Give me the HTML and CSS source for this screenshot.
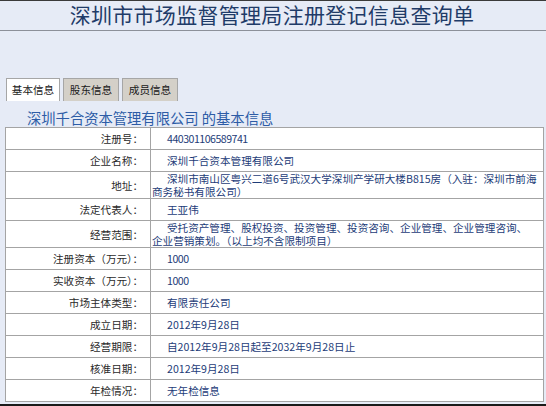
FILE: index.html
```html
<!DOCTYPE html>
<html lang="zh-CN">
<head>
<meta charset="utf-8">
<title>深圳市市场监督管理局注册登记信息查询单</title>
<link rel="stylesheet" href="styles.css">
</head>
<body>
<div class="page">
  <header class="header">
    <h1 class="title">深圳市市场监督管理局注册登记信息查询单</h1>
  </header>
  <nav class="tabs">
    <span class="tab active">基本信息</span>
    <span class="tab">股东信息</span>
    <span class="tab">成员信息</span>
  </nav>
  <h2 class="heading">深圳千合资本管理有限公司 的基本信息</h2>
  <table class="info">
    <tr><td class="label">注册号：</td><td class="value num">440301106589741</td></tr>
    <tr><td class="label">企业名称：</td><td class="value">深圳千合资本管理有限公司</td></tr>
    <tr class="double"><td class="label">地址：</td><td class="value">深圳市南山区粤兴二道6号武汉大学深圳产学研大楼B815房（入驻：深圳市前海商务秘书有限公司）</td></tr>
    <tr><td class="label">法定代表人：</td><td class="value">王亚伟</td></tr>
    <tr class="double"><td class="label">经营范围：</td><td class="value">受托资产管理、股权投资、投资管理、投资咨询、企业管理、企业管理咨询、企业营销策划。（以上均不含限制项目）</td></tr>
    <tr><td class="label">注册资本（万元）：</td><td class="value num">1000</td></tr>
    <tr><td class="label">实收资本（万元）：</td><td class="value num">1000</td></tr>
    <tr><td class="label">市场主体类型：</td><td class="value">有限责任公司</td></tr>
    <tr><td class="label">成立日期：</td><td class="value">2012年9月28日</td></tr>
    <tr><td class="label">经营期限：</td><td class="value">自2012年9月28日起至2032年9月28日止</td></tr>
    <tr><td class="label">核准日期：</td><td class="value">2012年9月28日</td></tr>
    <tr><td class="label">年检情况：</td><td class="value">无年检信息</td></tr>
  </table>
</div>
</body>
</html>
```

FILE: styles.css
```css
html, body {
  margin: 0;
  padding: 0;
  background: #e6ebf6;
}
body {
  font-family: "Noto Sans CJK SC", "DejaVu Sans", sans-serif;
  font-size: 10.6px;
  color: #222;
  height: 406px;
  overflow: hidden;
}
.page {
  border-top: 1px solid #3a3a3a;
  height: 403px;
  border-bottom: 2px solid #1a1a1a;
  box-sizing: content-box;
}
.header {
  height: 29px;
  border-bottom: 1px solid #8c9099;
  display: flex;
  justify-content: center;
}
.title {
  margin: 0;
  font-weight: normal;
  font-size: 21px;
  line-height: 26px;
  letter-spacing: 0.3px;
  color: #1f3b68;
  padding-right: 2px;
}
.tabs {
  display: flex;
  gap: 3px;
  padding-left: 6px;
  margin-top: 47px;
  height: 23px;
}
.tab {
  display: block;
  box-sizing: border-box;
  height: 23px;
  line-height: 21px;
  padding: 0;
  border: 1px solid #a6a6a6;
  border-bottom: none;
  background: #d4d0c8;
  color: #1a1a1a;
  width: 56px;
  text-align: center;
  white-space: nowrap;
}
.tab.active {
  background: #ffffff;
  width: 54px;
}
.heading {
  margin: 7px 0 0 27px;
  font-weight: normal;
  font-size: 14.3px;
  line-height: 19px;
  color: #2d5ca6;
  white-space: nowrap;
}
.info {
  margin: 0 0 0 5px;
  width: 539px;
  border-collapse: collapse;
  background: #ffffff;
  border: 1px solid #9a9a9a;
}
.info td {
  border: 1px solid #a4a4a4;
  height: 21px;
  padding: 0;
  line-height: 13px;
  vertical-align: middle;
}
.info .label {
  width: 137px;
  text-align: right;
  padding-right: 7px;
  color: #2a2a2a;
}
.info .value {
  padding-left: 1px;
  padding-right: 6px;
  text-indent: 15px;
  color: #1d3c78;
}
.info .num {
  letter-spacing: -0.5px;
}
.info tr.double td {
  height: 26px;
}
```
